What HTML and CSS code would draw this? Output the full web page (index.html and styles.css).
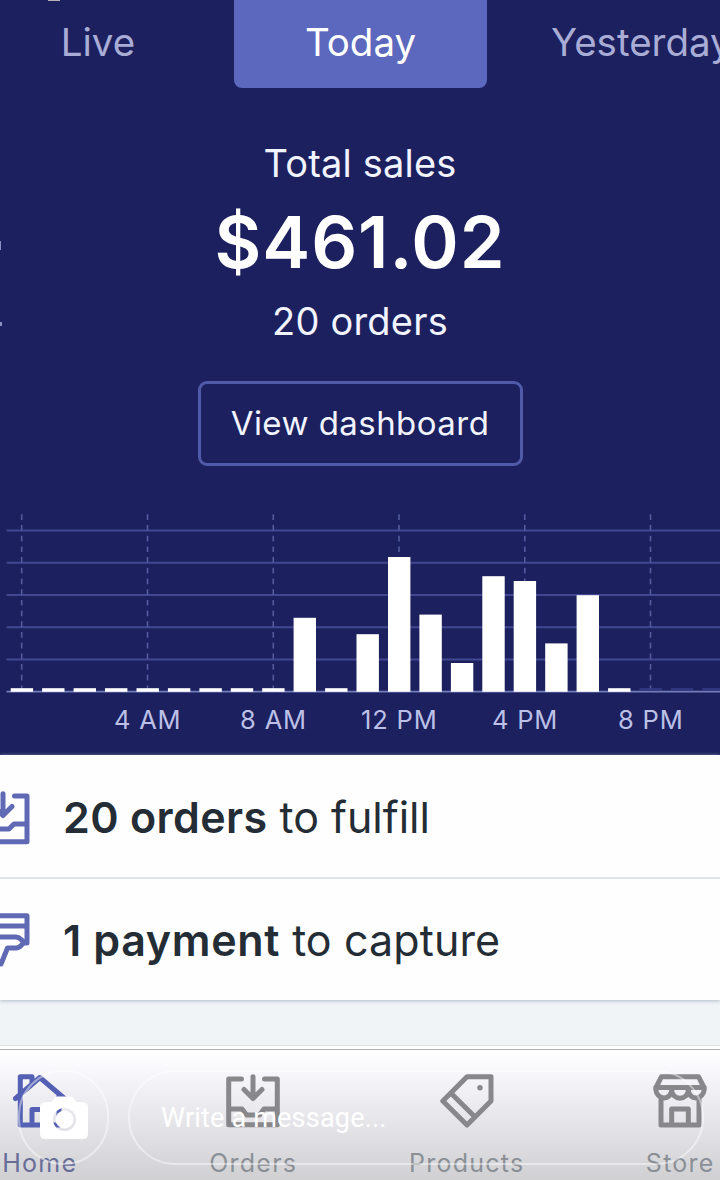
FILE: index.html
```html
<!DOCTYPE html>
<html lang="en">
<head>
    <meta charset="UTF-8">
    <meta name="viewport" content="width=device-width, initial-scale=1.0">
    <title>Home</title>
    <link rel="stylesheet" href="styles.css">
</head>
<body>
    <div class="screen">
        <div class="summary">
            <div class="tabs">
                <div class="tab tab-live"><span>Live</span></div>
                <div class="tab tab-today active"><span>Today</span></div>
                <div class="tab tab-yesterday"><span>Yesterday</span></div>
            </div>
            <!-- edges of the neighbouring page -->
            <i class="peek peek-top"></i>
            <i class="peek peek-amount"></i>
            <i class="peek peek-orders"></i>

            <div class="sales">
                <div class="sales-title"><span>Total sales</span></div>
                <div class="sales-amount"><span>$461.02</span></div>
                <div class="sales-orders"><span>20 orders</span></div>
                <button class="dashboard-btn"><span>View dashboard</span></button>
            </div>

            <svg class="chart" width="720" height="255" viewBox="0 500 720 255">
                <g class="grid">
                    <path d="M6.500 530.500H720M6.500 562.700H720M6.500 595H720M6.500 627.200H720M6.500 659.400H720"/>
                </g>
                <g class="hours">
                    <path d="M21.700 514.300V690M147.500 514.300V690M273.300 514.300V690M399 514.300V690M524.800 514.300V690M650.500 514.300V690"/>
                </g>
                <path class="base" d="M6.500 691.700H720"/>
                <g class="bars">
                    <rect x="10.700" y="688.200" width="22.400" height="3.600"/>
                    <rect x="42.100" y="688.200" width="22.400" height="3.600"/>
                    <rect x="73.600" y="688.200" width="22.400" height="3.600"/>
                    <rect x="105" y="688.200" width="22.400" height="3.600"/>
                    <rect x="136.500" y="688.200" width="22.400" height="3.600"/>
                    <rect x="167.900" y="688.200" width="22.400" height="3.600"/>
                    <rect x="199.400" y="688.200" width="22.400" height="3.600"/>
                    <rect x="230.800" y="688.200" width="22.400" height="3.600"/>
                    <rect x="262.200" y="688.200" width="22.400" height="3.600"/>
                    <rect x="293.600" y="617.800" width="22.400" height="74"/>
                    <rect x="325.100" y="688.200" width="22.400" height="3.600"/>
                    <rect x="356.500" y="634.200" width="22.400" height="57.600"/>
                    <rect x="388" y="557" width="22.400" height="134.800"/>
                    <rect x="419.400" y="614.600" width="22.400" height="77.200"/>
                    <rect x="450.900" y="663" width="22.400" height="28.800"/>
                    <rect x="482.300" y="576.200" width="22.400" height="115.600"/>
                    <rect x="513.700" y="581" width="22.400" height="110.800"/>
                    <rect x="545.200" y="643.400" width="22.400" height="48.400"/>
                    <rect x="576.600" y="595.200" width="22.400" height="96.600"/>
                    <rect x="608.100" y="688.200" width="22.400" height="3.600"/>
                </g>
                <!-- hours still to come -->
                <g class="bars-next">
                    <rect x="639.500" y="688.200" width="22.400" height="2.600"/>
                    <rect x="671" y="688.200" width="22.400" height="2.600"/>
                    <rect x="702.400" y="688.200" width="22.400" height="2.600"/>
                </g>
                <g class="labels">
                    <text x="147.700" y="729">4 AM</text>
                    <text x="273.500" y="729">8 AM</text>
                    <text x="399.300" y="729">12 PM</text>
                    <text x="525" y="729">4 PM</text>
                    <text x="650.800" y="729">8 PM</text>
                </g>
            </svg>
        </div>

        <div class="todo">
            <div class="todo-row">
                <svg class="todo-icon" width="54" height="54" viewBox="0 0 54 54">
                    <path d="M15.500 5H2.700V50.700H51V5H38.500M27 2.700V23M18 15.500L27 24.500L36 15.500M2.700 38H33L38 33H51"/>
                </svg>
                <div class="todo-text"><b>20 orders</b> <span>to fulfill</span></div>
            </div>
            <div class="todo-row">
                <svg class="todo-icon" width="54" height="54" viewBox="0 0 54 54">
                    <path d="M48.500 30H51V2.700H2.700V24H40C44 24 44.500 27 48.500 29.500C45 31 45 35 40 35H31.500L25 51M2.700 13H51"/>
                </svg>
                <div class="todo-text payment"><b>1 payment</b> <span>to capture</span></div>
            </div>
        </div>
        <div class="page-gap"></div>

        <div class="bottom">
            <div class="nav">
                <div class="nav-item selected">
                    <svg width="54" height="54" viewBox="0 0 54 54">
                        <path d="M7.300 20V2.700H19V9M2.500 24.500L26.800 3.500L51.500 24.500M7.300 20V51H46V21M19 51V35.500H34V51"/>
                    </svg>
                    <span>Home</span>
                </div>
                <div class="nav-item">
                    <svg width="54" height="54" viewBox="0 0 54 54">
                        <path d="M15.500 5H2.700V50.700H51.300V5H38.500M27 2.700V23M18 15.500L27 24.500L36 15.500M2.700 35H16L20.500 41H33.500L38 35H51.300"/>
                    </svg>
                    <span>Orders</span>
                </div>
                <div class="nav-item">
                    <svg width="54" height="54" viewBox="0 0 54 54">
                        <path d="M2.800 27L27 2.700H51V27L27 51ZM10.800 19L35 43"/>
                        <circle cx="40" cy="13.700" r="2.700"/>
                    </svg>
                    <span>Products</span>
                </div>
                <div class="nav-item">
                    <svg width="54" height="54" viewBox="0 0 54 54">
                        <path d="M8.500 2.700H45.500L51 13.500H3ZM2.700 13.500C2.700 27 18.700 27 18.700 15.500C18.700 27 35.300 27 35.300 15.500C35.300 27 51.300 27 51.300 13.500M8 24V51H46V24M18.700 51V35H35.300V51"/>
                    </svg>
                    <span>Store</span>
                </div>
            </div>

            <!-- reply bar lies over the navigation -->
            <div class="reply">
                <div class="camera">
                    <svg width="50" height="46" viewBox="0 0 50 46">
                        <path fill-rule="evenodd" d="M6.500 7H12C14.500 7 14 1.500 18.500 1.500H31.500C36 1.500 35.500 7 38 7H43.500Q49 7 49 12.500V38.500Q49 44 43.500 44H6.500Q1 44 1 38.500V12.500Q1 7 6.500 7ZM25.500 13A11.500 11.500 0 1 0 25.500 36A11.500 11.500 0 1 0 25.500 13Z"/>
                        <circle cx="25.500" cy="24.500" r="9"/>
                    </svg>
                </div>
                <div class="message"><span>Write a message...</span></div>
            </div>
        </div>
    </div>
</body>
</html>
```

FILE: styles.css
```css
body{
    margin: 0;
    font-family: Inter, "Liberation Sans", sans-serif;
}
.screen{
    width: 720px;
    height: 1180px;
    overflow: hidden;
    background: #fff;
}
.summary{
    position: relative;
    height: 755px;
    background: #1c205e;
    color: #f1f3ff;
}
.tabs{
    display: flex;
    height: 88px;
    overflow: hidden;
}
.tab{
    box-sizing: border-box;
    padding-bottom: 4px;
    line-height: 84px;
    font-size: 38.500px;
    text-align: center;
    color: #a9add6;
    flex-shrink: 0;
}
.tab-live{
    width: 196px;
    margin-right: 38px;
}
.tab-today{
    width: 253px;
    margin-right: 64px;
}
.active{
    background: #5b68bd;
    color: #fff;
    border-radius: 0 0 8px 8px;
}
.peek{
    position: absolute;
    background: #8b90c4;
}
.peek-top{
    left: 48px;
    top: 0;
    width: 12px;
    height: 1px;
    background: #b5b3b5;
}
.peek-amount{
    left: 0;
    top: 241px;
    width: 1px;
    height: 9px;
}
.peek-orders{
    left: 0;
    top: 322px;
    width: 2px;
    height: 4px;
}
.sales{
    display: flex;
    flex-direction: column;
    align-items: center;
    padding-top: 50px;
    height: 362px;
}
.sales-title{
    font-size: 38px;
    line-height: 50px;
    letter-spacing: 0.200px;
}
.sales-amount{
    font-size: 72px;
    font-weight: 600;
    line-height: 88px;
    letter-spacing: 0.900px;
    margin-top: 10px;
    color: #fff;
}
.sales-orders{
    font-size: 38px;
    line-height: 50px;
    letter-spacing: 0.200px;
    margin-top: 10px;
}
.dashboard-btn{
    box-sizing: border-box;
    width: 325px;
    height: 85px;
    margin-top: 35px;
    border: 3px solid #515aa8;
    border-radius: 9px;
    background: none;
    color: #f1f3ff;
    font: 33px Inter, "Liberation Sans", sans-serif;
    letter-spacing: 0.450px;
    padding: 0 0 2px;
}
.chart{
    display: block;
}
.grid path{
    stroke: #414890;
    stroke-width: 2;
}
.hours path{
    stroke: #535a9f;
    stroke-width: 1.600;
    stroke-dasharray: 5.700 5;
}
.base{
    stroke: #757cba;
    stroke-width: 1.800;
}
.bars{
    fill: #fff;
}
.bars-next{
    fill: #353b83;
}
.labels{
    fill: #bcc0e6;
    font-size: 25.500px;
    letter-spacing: 0.800px;
    text-anchor: middle;
}
.todo{
    position: relative;
    background: #fefefe;
    box-shadow: 0 1px 4px #aebac6;
}
.todo-row{
    display: flex;
    align-items: center;
    height: 122px;
    border-bottom: 2px solid #dfe4e7;
}
.todo-row:last-child{
    height: 121px;
    border-bottom: 0;
}
.todo-icon{
    margin-left: -24px;
    margin-right: 33px;
    margin-top: 3px;
    flex-shrink: 0;
    fill: none;
    stroke: #6069b3;
    stroke-width: 5;
    stroke-linecap: round;
    stroke-linejoin: round;
}
.todo-row:last-child .todo-icon{
    margin-top: 0;
}
.todo-text{
    font-size: 43px;
    line-height: 56px;
    padding-top: 2px;
    color: #242d35;
    white-space: nowrap;
}
.todo-text b{
    font-weight: 600;
    letter-spacing: 0.350px;
}
.payment{
    padding-top: 0;
}
.payment b{
    letter-spacing: 0.650px;
}
.payment span{
    letter-spacing: 0.100px;
}
.page-gap{
    height: 45px;
    background: #f0f4f7;
    border-bottom: 1px solid #dfe2e3;
}
.bottom{
    position: relative;
    height: 130px;
    margin-top: 3px;
    border-top: 1px solid #adadb0;
    background: linear-gradient(#fff, #f7f7fb 18%, #e1e1e5 65%, #d0d0d3);
}
.nav{
    display: flex;
    width: 854px;
    margin-left: -67px;
}
.nav-item{
    display: flex;
    flex-direction: column;
    align-items: center;
    width: 213.500px;
    padding-top: 24px;
    color: #8b8f96;
    font-size: 25px;
    line-height: 32px;
    letter-spacing: 1.250px;
}
.nav-item svg{
    fill: none;
    stroke: #88888b;
    stroke-width: 5;
    stroke-linecap: round;
    stroke-linejoin: round;
    margin-bottom: 19px;
}
.nav-item circle{
    fill: #88888b;
    stroke: none;
}
.nav-item.selected{
    color: #686d98;
}
.nav-item.selected svg{
    stroke: #5360b3;
}
.reply{
    position: absolute;
    left: 18px;
    top: 20px;
    display: flex;
    gap: 19px;
}
.camera, .message{
    box-sizing: border-box;
    height: 95px;
    border: 2px solid rgba(255, 255, 255, 0.450);
    border-radius: 48px;
}
.camera{
    width: 91px;
    padding: 23px 0 0 19px;
}
.camera svg{
    fill: #fff;
}
.message{
    width: 576px;
    padding-left: 31px;
    font: 27px/93px Roboto, sans-serif;
    letter-spacing: 0.200px;
    color: #fff;
}
```
